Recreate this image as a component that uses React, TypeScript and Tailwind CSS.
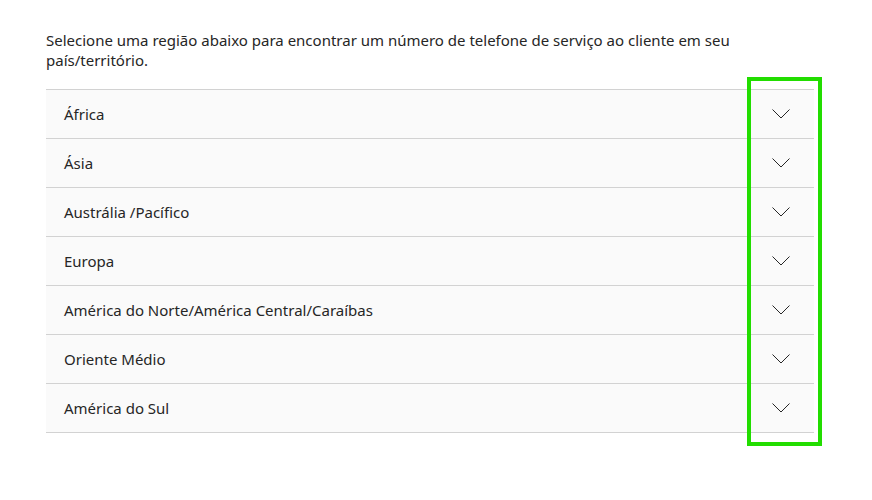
import { ChevronDown } from "lucide-react";

const regions = [
  "África",
  "Ásia",
  "Austrália /Pacífico",
  "Europa",
  "América do Norte/América Central/Caraíbas",
  "Oriente Médio",
  "América do Sul",
];

export default function App() {
  return (
    <div className="relative min-h-[500px] bg-white font-['Noto_Sans',sans-serif] text-[#262626]">
      <div className="w-[768px] pl-[46px] pt-[30px] box-content">
        <p className="pr-[60px] text-[15px] leading-[20px]">
          Selecione uma região abaixo para encontrar um número de telefone de serviço ao cliente em seu
          país/território.
        </p>
        <ul className="mt-[19px] border-t border-[#d2d2d2]">
          {regions.map((r) => (
            <li
              key={r}
              className="flex h-[49px] items-center justify-between border-b border-[#d2d2d2] bg-[#fafafa] pl-[18px] pr-[24px] text-[15px]"
            >
              <span>{r}</span>
              <svg width="18" height="10" viewBox="0 0 18 10" className="text-[#262626]">
                <path d="M0.5 0.5 L9 9 L17.5 0.5" fill="none" stroke="currentColor" strokeWidth="1" />
              </svg>
            </li>
          ))}
        </ul>
      </div>
      <div className="absolute left-[747px] top-[77px] h-[369px] w-[75px] border-4 border-[#22dd00]" />
    </div>
  );
}
